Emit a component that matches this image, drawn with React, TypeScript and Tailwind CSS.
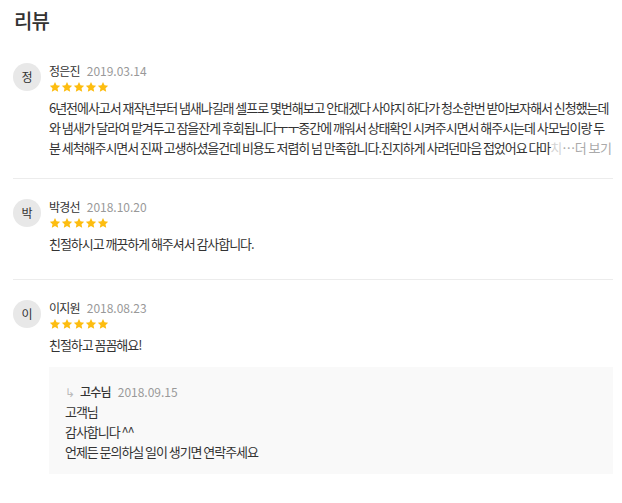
import React from 'react';

type Reply = {
  name: string;
  date: string;
  lines: string[];
};

type Review = {
  initial: string;
  name: string;
  date: string;
  lines: string[];
  tail?: string;
  reply?: Reply;
  pad: string;
};

const reviews: Review[] = [
  {
    initial: '정',
    name: '정은진',
    date: '2019.03.14',
    lines: [
      '6년전에사고서 재작년부터 냄새나길래 셀프로 몇번해보고 안대겠다 사야지 하다가 청소한번 받아보자해서 신청했는데',
      '와 냄새가 달라여 맡겨두고 잠을잔게 후회됩니다ㅜㅜ중간에 깨워서 상태확인 시켜주시면서 해주시는데 사모님이랑 두',
      '분 세척해주시면서 진짜 고생하셨을건데 비용도 저렴히 넘 만족합니다.진지하게 사려던마음 접었어요 다마',
    ],
    tail: '치',
    pad: 'pt-0 pb-[20px]',
  },
  {
    initial: '박',
    name: '박경선',
    date: '2018.10.20',
    lines: ['친절하시고 깨끗하게 해주셔서 감사합니다.'],
    pad: 'pt-[20px] pb-[25px]',
  },
  {
    initial: '이',
    name: '이지원',
    date: '2018.08.23',
    lines: ['친절하고 꼼꼼해요!'],
    pad: 'pt-[20px] pb-[20px]',
    reply: {
      name: '고수님',
      date: '2018.09.15',
      lines: ['고객님', '감사합니다 ^^', '언제든 문의하실 일이 생기면 연락주세요'],
    },
  },
];

function Star() {
  return (
    <svg viewBox="0 0 24 24" className="h-[12px] w-[12px]" fill="#fdbd10">
      <path d="M12 1.8l3.1 6.6 7.2.9-5.3 5 1.4 7.1L12 17.9l-6.4 3.5 1.4-7.1-5.3-5 7.2-.9z" />
    </svg>
  );
}

function Stars() {
  return (
    <div className="mt-[2px] flex h-[12px]">
      {[0, 1, 2, 3, 4].map((i) => (
        <Star key={i} />
      ))}
    </div>
  );
}

function ReviewItem({ review, last }: { review: Review; last: boolean }) {
  const n = review.lines.length;
  return (
    <div className={`flex gap-[8px] ${review.pad} ${last ? '' : 'border-b border-[#ececec]'}`}>
      <div className="flex h-[28px] w-[28px] shrink-0 items-center justify-center rounded-full bg-[#e8e8e8] text-[12px] text-[#333]">
        {review.initial}
      </div>
      <div className="min-w-0 flex-1">
        <div className="flex h-[16px] items-center gap-[7px] leading-4">
          <span className="text-[12px] tracking-[-0.8px] text-[#333]">{review.name}</span>
          <span className="text-[12px] text-[#999]">{review.date}</span>
        </div>
        <Stars />
        <div className="mt-[5px] text-[13px] leading-5 tracking-[-1.05px] text-[#333]">
          {review.lines.map((line, i) => (
            <div key={i} className="overflow-hidden whitespace-nowrap">
              {line}
              {i === n - 1 && review.tail && (
                <>
                  <span className="text-[#d4d4d4]">{review.tail}</span>
                  <span className="ml-[1px] tracking-[-0.5px] text-[#aaa]">…더 보기</span>
                </>
              )}
            </div>
          ))}
        </div>
        {review.reply && (
          <div className="mt-[12px] bg-[#f9f9f9] px-[16px] pt-[15px] pb-[12px]">
            <div className="flex h-5 items-center text-[12px]">
              <span className="mr-[5px] text-[#bbb]">↳</span>
              <span className="mr-[7px] font-medium tracking-[-0.8px] text-[#333]">{review.reply.name}</span>
              <span className="text-[#999]">{review.reply.date}</span>
            </div>
            {review.reply.lines.map((line, i) => (
              <div key={i} className="text-[13px] leading-5 tracking-[-1.05px] text-[#333]">
                {line}
              </div>
            ))}
          </div>
        )}
      </div>
    </div>
  );
}

export default function App() {
  return (
    <div
      className="h-[503px] w-[622px] bg-white pr-[9px] pl-[13px]"
      style={{ fontFamily: '"Noto Sans CJK KR", "Noto Sans", sans-serif' }}
    >
      <h1 className="pt-[8px] pl-[1px] text-[20px] leading-[26px] font-medium tracking-[-1px] text-[#333]">리뷰</h1>
      <div className="mt-[29px]">
        {reviews.map((r, i) => (
          <ReviewItem key={r.name} review={r} last={i === reviews.length - 1} />
        ))}
      </div>
    </div>
  );
}
